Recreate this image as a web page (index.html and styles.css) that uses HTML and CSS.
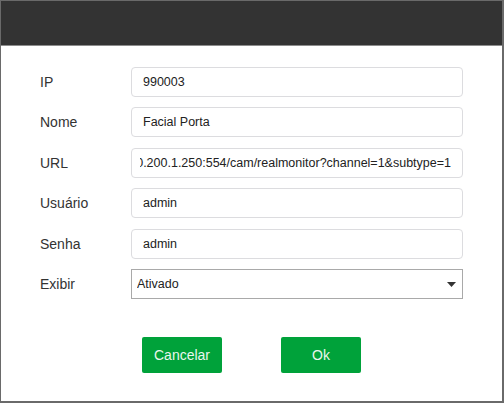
FILE: index.html
```html
<!DOCTYPE html>
<html lang="pt">
<head>
<meta charset="utf-8">
<title>Câmera</title>
<link rel="stylesheet" href="styles.css">
</head>
<body>
<div class="dialog">
  <div class="header"></div>
  <form class="form">
    <label class="label" for="ip">IP</label>
    <input class="field" id="ip" type="text" value="990003">
    <label class="label" for="nome">Nome</label>
    <input class="field" id="nome" type="text" value="Facial Porta">
    <label class="label">URL</label>
    <div class="field url"><div class="url-inner"><span>rtsp://admin:admin@10.200.1.250:554/cam/realmonitor?channel=1&amp;subtype=1</span></div></div>
    <label class="label" for="usuario">Usuário</label>
    <input class="field" id="usuario" type="text" value="admin">
    <label class="label" for="senha">Senha</label>
    <input class="field" id="senha" type="text" value="admin">
    <label class="label" for="exibir">Exibir</label>
    <div class="select-wrap">
      <select class="select" id="exibir">
        <option>Ativado</option>
        <option>Desativado</option>
      </select>
      <svg class="arrow" width="9" height="5" viewBox="0 0 9 5"><path d="M0 0H9L4.5 5Z" fill="#333"/></svg>
    </div>
  </form>
  <div class="actions">
    <button class="btn" type="button">Cancelar</button>
    <button class="btn" type="button">Ok</button>
  </div>
</div>
</body>
</html>
```
FILE: styles.css
```css
html, body {
  margin: 0;
  padding: 0;
  background: #ffffff;
}
.dialog {
  box-sizing: border-box;
  width: 504px;
  height: 403px;
  border: 1px solid #6a6a6a;
  border-right-width: 2px;
  border-bottom-width: 2px;
  background: #ffffff;
  font-family: "Liberation Sans", Arial, sans-serif;
  display: flex;
  flex-direction: column;
}
.header {
  height: 44px;
  background: #333333;
  border-bottom: 1px solid #8c8c8c;
  flex: none;
}
.form {
  display: grid;
  grid-template-columns: 91px 332px;
  row-gap: 10.4px;
  padding: 21px 0 0 39px;
  margin: 0;
  align-items: center;
}
.label {
  font-size: 14px;
  color: #333333;
  height: 30px;
  line-height: 30px;
}
.field {
  box-sizing: border-box;
  height: 30px;
  width: 332px;
  border: 1px solid #dcdcdf;
  border-radius: 4px;
  padding: 0 11px;
  font-family: "Liberation Sans", Arial, sans-serif;
  font-size: 12.5px;
  color: #222222;
  background: #ffffff;
  outline: none;
  margin: 0;
}
.url {
  display: flex;
  align-items: center;
  padding: 0 11px 0 8px;
}
.url-inner {
  flex: 1;
  min-width: 0;
  display: flex;
  justify-content: flex-end;
  overflow: hidden;
  white-space: nowrap;
}
.url-inner span {
  flex: none;
}
.select-wrap {
  position: relative;
  width: 332px;
  height: 30px;
}
.select {
  box-sizing: border-box;
  width: 332px;
  height: 30px;
  border: 1px solid #a9a9a9;
  border-radius: 0;
  padding: 0 0 0 5px;
  font-family: "Liberation Sans", Arial, sans-serif;
  font-size: 12.5px;
  color: #222222;
  background: #ffffff;
  appearance: none;
  -webkit-appearance: none;
  outline: none;
  margin: 0;
}
.arrow {
  position: absolute;
  right: 7px;
  top: 13px;
  pointer-events: none;
}
.actions {
  display: flex;
  gap: 59px;
  padding: 38px 0 0 141px;
}
.btn {
  width: 80px;
  height: 36px;
  background: #00a23a;
  color: #eaf6ee;
  border: none;
  border-radius: 2px;
  font-family: "Liberation Sans", Arial, sans-serif;
  font-size: 14px;
  padding: 0;
  cursor: pointer;
}
```
